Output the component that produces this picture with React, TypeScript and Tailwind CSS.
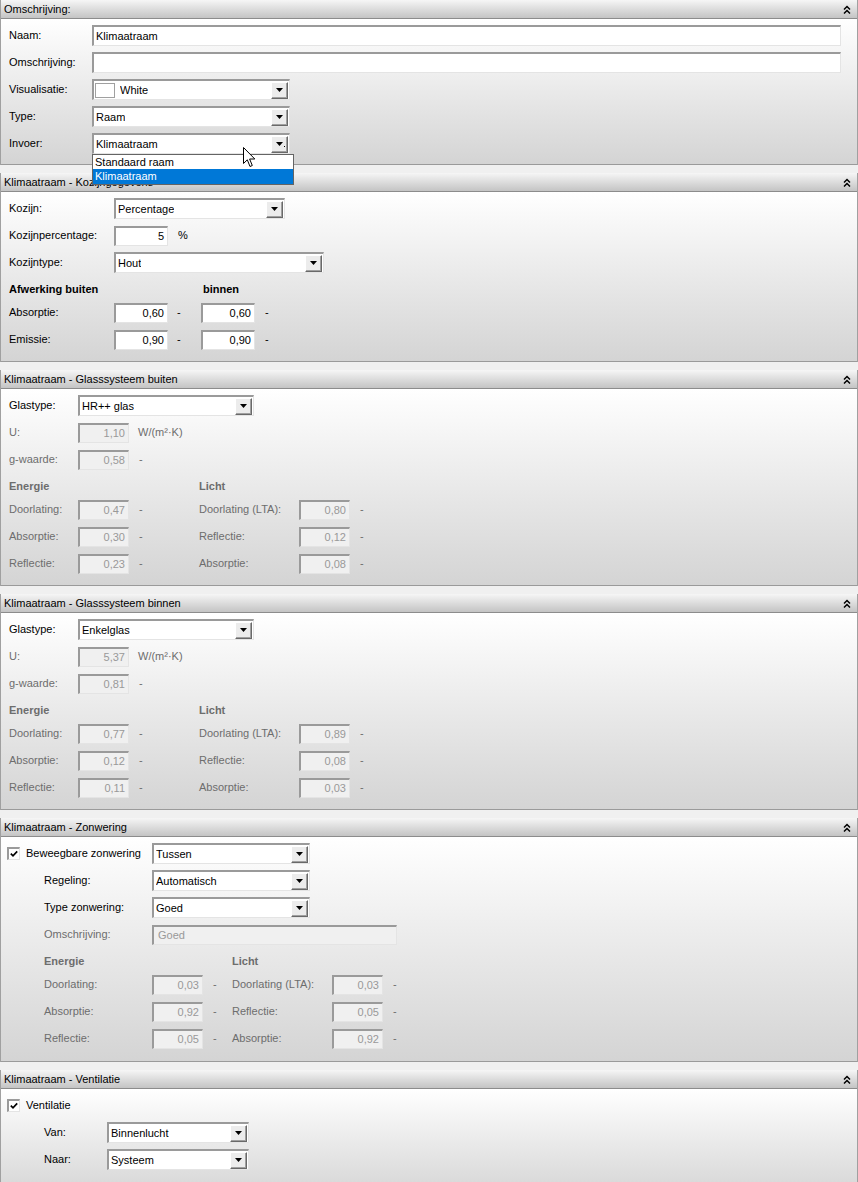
import React from 'react';

const sunken =
  'border-t-2 border-l-2 border-r border-b border-t-[#9a9a9a] border-l-[#9a9a9a] border-r-[#e4e4e4] border-b-[#e4e4e4]';

type Kids = { children?: React.ReactNode };

function Label({ className = '', muted = false, bold = false, children }: Kids & { className?: string; muted?: boolean; bold?: boolean }) {
  return (
    <span
      className={`shrink-0 text-[11px] leading-[13px] whitespace-nowrap ${bold ? 'font-bold' : ''} ${
        muted ? 'text-[#6d6d6d]' : 'text-black'
      } ${className}`}
    >
      {children}
    </span>
  );
}

function Field({
  className = '',
  value = '',
  disabled = false,
  right = false,
  tall = false,
}: {
  className?: string;
  value?: string;
  disabled?: boolean;
  right?: boolean;
  tall?: boolean;
}) {
  return (
    <div
      className={`${sunken} ${tall ? 'h-[21px]' : 'h-[20px]'} shrink-0 flex items-center text-[11px] leading-[13px] whitespace-nowrap overflow-hidden ${
        right ? 'justify-end pr-[3px]' : 'pl-[2px]'
      } ${disabled ? 'bg-[#f0f0f0] text-[#999999]' : 'bg-white text-black'} ${className}`}
    >
      {value}
    </div>
  );
}

function Combo({ className = '', value, swatch = false, focus = false }: { className?: string; value: string; swatch?: boolean; focus?: boolean }) {
  return (
    <div className={`${sunken} h-[21px] shrink-0 bg-white flex items-center pl-[2px] pr-[1px] text-[11px] leading-[13px] text-black ${className}`}>
      {swatch && <span className="w-[20px] h-[15px] -ml-[1px] mr-[5px] border border-[#a0a0a0] bg-white shrink-0" />}
      <span className="whitespace-nowrap overflow-hidden">{value}</span>
      <span className="ml-auto relative w-[17px] h-[17px] shrink-0 bg-[#ececec] border border-t-white border-l-white border-b-[#696969] border-r-[#696969] shadow-[inset_-1px_-1px_0_#a0a0a0] flex items-center justify-center">
        <svg width="7" height="4" viewBox="0 0 7 4">
          <path d="M0 0h7L3.5 4z" fill="#000" />
        </svg>
        {focus && <span className="absolute right-[2px] bottom-[5px] w-[1px] h-[1px] bg-black" />}
      </span>
    </div>
  );
}

function Check() {
  return (
    <span className={`${sunken} w-[13px] h-[13px] bg-white flex items-center justify-center shrink-0`}>
      <svg width="8" height="8" viewBox="0 0 8 8">
        <path d="M0.8 3.6 L3 5.8 L7.2 1.4" stroke="#000" strokeWidth="1.7" fill="none" />
      </svg>
    </span>
  );
}

function Dash({ className = '', muted = false }: { className?: string; muted?: boolean }) {
  return <Label muted={muted} className={className}>-</Label>;
}

function Row({ className = '', children }: Kids & { className?: string }) {
  return <div className={`flex items-center h-[27px] ${className}`}>{children}</div>;
}

function Heading({ className = '', children }: Kids & { className?: string }) {
  return <div className={`flex items-start h-[23px] pt-[7px] ${className}`}>{children}</div>;
}

function Panel({ title, bodyClass, children }: Kids & { title: string; bodyClass: string }) {
  return (
    <div className="border-x border-[#a0a0a0] mb-2">
      <div className="h-[19px] bg-linear-to-b from-[#f6f6f6] to-[#c4c4c4] border-b border-[#8c8c8c] flex items-center pl-[3px] pr-[6px]">
        <span className="text-[11px] leading-[13px] text-black whitespace-nowrap">{title}</span>
        <svg className="ml-auto" width="8" height="9" viewBox="0 0 8 9">
          <polyline points="1,4.5 4,1.5 7,4.5" stroke="#000" strokeWidth="1.5" fill="none" />
          <polyline points="1,8.5 4,5.5 7,8.5" stroke="#000" strokeWidth="1.5" fill="none" />
        </svg>
      </div>
      <div className={`bg-linear-to-b from-white to-[#d4d4d4] border-b border-[#9a9a9a] pt-[3px] ${bodyClass}`}>{children}</div>
    </div>
  );
}

type GlassRow = [string, string, string, string];

function GlassPanel({ title, glas, u, g, rows, bodyClass }: { title: string; glas: string; u: string; g: string; rows: GlassRow[]; bodyClass: string }) {
  return (
    <Panel title={title} bodyClass={bodyClass}>
      <div className="pl-[8px]">
        <Row>
          <Label className="w-[69px]">Glastype:</Label>
          <Combo className="w-[176px]" value={glas} />
        </Row>
        <Row>
          <Label muted className="w-[69px]">U:</Label>
          <Field className="w-[51px]" value={u} disabled right />
          <Label muted className="ml-[9px]">W/(m²·K)</Label>
        </Row>
        <Row>
          <Label muted className="w-[69px]">g-waarde:</Label>
          <Field className="w-[51px]" value={g} disabled right />
          <Dash muted className="ml-[10px]" />
        </Row>
        <Heading>
          <Label muted bold className="w-[190px]">Energie</Label>
          <Label muted bold>Licht</Label>
        </Heading>
        {rows.map(([l1, v1, l2, v2]) => (
          <Row key={l1 + l2}>
            <div className="w-[190px] flex items-center shrink-0">
              <Label muted className="w-[69px]">{l1}</Label>
              <Field className="w-[51px]" value={v1} disabled right />
              <Dash muted className="ml-[10px]" />
            </div>
            <Label muted className="w-[100px]">{l2}</Label>
            <Field className="w-[51px]" value={v2} disabled right />
            <Dash muted className="ml-[10px]" />
          </Row>
        ))}
      </div>
    </Panel>
  );
}

export default function App() {
  return (
    <div className="relative w-[858px] h-[1182px] overflow-hidden bg-[#f0f0f0] font-['Liberation_Sans',Arial,sans-serif]">
      <Panel title="Omschrijving:" bodyClass="h-[146px]">
        <div className="pl-[8px]">
          <Row>
            <Label className="w-[83px]">Naam:</Label>
            <Field className="w-[749px]" value="Klimaatraam" tall />
          </Row>
          <Row>
            <Label className="w-[83px]">Omschrijving:</Label>
            <Field className="w-[749px]" tall />
          </Row>
          <Row>
            <Label className="w-[83px]">Visualisatie:</Label>
            <Combo className="w-[198px]" value="White" swatch />
          </Row>
          <Row>
            <Label className="w-[83px]">Type:</Label>
            <Combo className="w-[198px]" value="Raam" />
          </Row>
          <Row>
            <Label className="w-[83px]">Invoer:</Label>
            <Combo className="w-[198px]" value="Klimaatraam" focus />
          </Row>
        </div>
      </Panel>

      <Panel title="Klimaatraam - Kozijngegevens" bodyClass="h-[170px]">
        <div className="pl-[8px]">
          <Row>
            <Label className="w-[105px]">Kozijn:</Label>
            <Combo className="w-[171px]" value="Percentage" />
          </Row>
          <Row>
            <Label className="w-[105px]">Kozijnpercentage:</Label>
            <Field className="w-[54px]" value="5" right />
            <Label className="ml-[10px]">%</Label>
          </Row>
          <Row>
            <Label className="w-[105px]">Kozijntype:</Label>
            <Combo className="w-[210px]" value="Hout" />
          </Row>
          <Heading>
            <Label bold className="w-[194px]">Afwerking buiten</Label>
            <Label bold>binnen</Label>
          </Heading>
          {[
            ['Absorptie:', '0,60', '0,60'],
            ['Emissie:', '0,90', '0,90'],
          ].map(([l, a, b]) => (
            <Row key={l}>
              <div className="w-[192px] flex items-center shrink-0">
                <Label className="w-[105px]">{l}</Label>
                <Field className="w-[54px]" value={a} right />
                <Dash className="ml-[9px]" />
              </div>
              <Field className="w-[54px]" value={b} right />
              <Dash className="ml-[10px]" />
            </Row>
          ))}
        </div>
      </Panel>

      <GlassPanel
        title="Klimaatraam - Glasssysteem buiten"
        bodyClass="h-[197px]"
        glas="HR++ glas"
        u="1,10"
        g="0,58"
        rows={[
          ['Doorlating:', '0,47', 'Doorlating (LTA):', '0,80'],
          ['Absorptie:', '0,30', 'Reflectie:', '0,12'],
          ['Reflectie:', '0,23', 'Absorptie:', '0,08'],
        ]}
      />

      <GlassPanel
        title="Klimaatraam - Glasssysteem binnen"
        bodyClass="h-[197px]"
        glas="Enkelglas"
        u="5,37"
        g="0,81"
        rows={[
          ['Doorlating:', '0,77', 'Doorlating (LTA):', '0,89'],
          ['Absorptie:', '0,12', 'Reflectie:', '0,08'],
          ['Reflectie:', '0,11', 'Absorptie:', '0,03'],
        ]}
      />

      <Panel title="Klimaatraam - Zonwering" bodyClass="h-[225px]">
        <Row className="pl-[6px]">
          <div className="w-[145px] flex items-center shrink-0">
            <Check />
            <Label className="ml-[6px]">Beweegbare zonwering</Label>
          </div>
          <Combo className="w-[158px]" value="Tussen" />
        </Row>
        <div className="pl-[43px]">
          <Row>
            <Label className="w-[108px]">Regeling:</Label>
            <Combo className="w-[158px]" value="Automatisch" />
          </Row>
          <Row>
            <Label className="w-[108px]">Type zonwering:</Label>
            <Combo className="w-[158px]" value="Goed" />
          </Row>
          <Row>
            <Label muted className="w-[108px]">Omschrijving:</Label>
            <Field className="w-[245px] pl-[4px]" value="Goed" disabled />
          </Row>
          <Heading>
            <Label muted bold className="w-[188px]">Energie</Label>
            <Label muted bold>Licht</Label>
          </Heading>
          {[
            ['Doorlating:', '0,03', 'Doorlating (LTA):', '0,03'],
            ['Absorptie:', '0,92', 'Reflectie:', '0,05'],
            ['Reflectie:', '0,05', 'Absorptie:', '0,92'],
          ].map(([l1, v1, l2, v2]) => (
            <Row key={l1 + l2}>
              <div className="w-[188px] flex items-center shrink-0">
                <Label muted className="w-[108px]">{l1}</Label>
                <Field className="w-[51px]" value={v1} disabled right />
                <Dash muted className="ml-[10px]" />
              </div>
              <Label muted className="w-[100px]">{l2}</Label>
              <Field className="w-[51px]" value={v2} disabled right />
              <Dash muted className="ml-[10px]" />
            </Row>
          ))}
        </div>
      </Panel>

      <Panel title="Klimaatraam - Ventilatie" bodyClass="h-[110px]">
        <Row className="pl-[6px]">
          <Check />
          <Label className="ml-[6px]">Ventilatie</Label>
        </Row>
        <div className="pl-[43px]">
          <Row>
            <Label className="w-[63px]">Van:</Label>
            <Combo className="w-[142px]" value="Binnenlucht" />
          </Row>
          <Row>
            <Label className="w-[63px]">Naar:</Label>
            <Combo className="w-[142px]" value="Systeem" />
          </Row>
        </div>
      </Panel>

      {/* open dropdown of "Invoer" */}
      <div className="absolute left-[92px] top-[154px] w-[202px] border border-[#646464] bg-white z-10 text-[11px] leading-[15px]">
        <div className="h-[14px] leading-[14px] pl-[2px] text-black">Standaard raam</div>
        <div className="h-[15px] pl-[2px] bg-[#0078d7] text-white">Klimaatraam</div>
      </div>

      <svg className="absolute left-[243px] top-[147px] z-20" width="13" height="21" viewBox="0 0 13 21">
        <path d="M0.5 0.5 L0.5 16.5 L4.3 12.8 L7 19.5 L9.3 18.5 L6.6 12 L11.8 12 Z" fill="#fff" stroke="#000" strokeWidth="1" />
      </svg>
    </div>
  );
}
